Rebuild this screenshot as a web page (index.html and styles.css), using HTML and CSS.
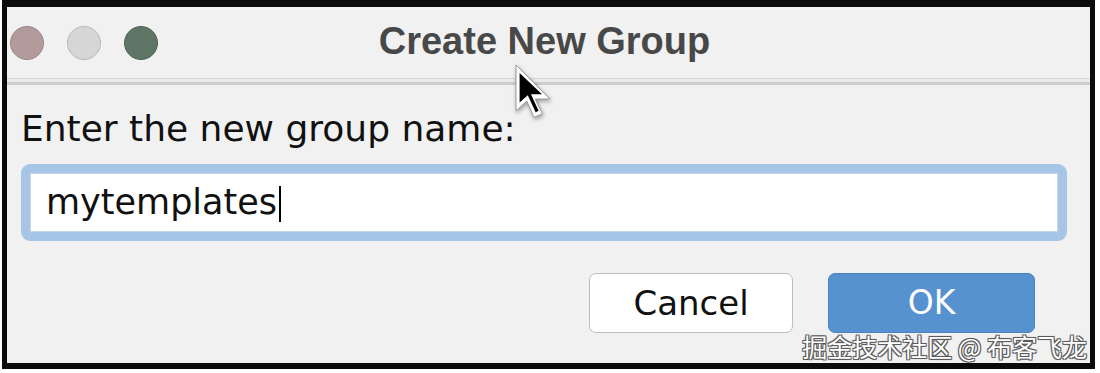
FILE: index.html
```html
<!DOCTYPE html>
<html lang="en">
<head>
<meta charset="utf-8">
<title>Create New Group</title>
<link rel="stylesheet" href="styles.css">
</head>
<body>
<div class="window">
  <div class="titlebar">
    <div class="lights">
      <span class="light light-close"></span>
      <span class="light light-min"></span>
      <span class="light light-max"></span>
    </div>
    <div class="title">Create New Group</div>
    <div class="spacer"></div>
  </div>
  <div class="sep"></div>
  <div class="content">
    <div class="label">Enter the new group name:</div>
    <div class="field"><span class="value">mytemplates</span><span class="caret"></span></div>
    <div class="actions">
      <button class="btn btn-cancel">Cancel</button>
      <button class="btn btn-ok">OK</button>
    </div>
  </div>
</div>
<svg class="pointer" width="40" height="56" viewBox="0 0 20 28" aria-hidden="true">
  <path d="M1,1 L1,24 L6.4,19 L10,27.2 L14.2,25.4 L10.6,18 L18,18 Z" fill="#ffffff" stroke="#9a9a9a" stroke-width="0.5" stroke-linejoin="round"/>
  <path d="M2.8,5 L2.8,19.8 L6.9,16.1 L10.8,24.6 L12.3,23.9 L8.5,15.6 L14,15.6 Z" fill="#000000"/>
</svg>
<div class="watermark">掘金技术社区 @ 布客飞龙</div>
</body>
</html>
```
FILE: styles.css
```css
html, body {
  margin: 0;
  padding: 0;
  background: #ffffff;
}

body {
  width: 1100px;
  height: 373px;
  overflow: hidden;
  font-family: "DejaVu Sans", "Liberation Sans", sans-serif;
}

.window {
  margin-left: 2px;
  width: 1093px;
  height: 369px;
  box-sizing: border-box;
  border-style: solid;
  border-color: #0b0b0b;
  border-width: 7px 5px 6px 5px;
  background: #f1f1f1;
  display: flex;
  flex-direction: column;
}

.titlebar {
  height: 71px;
  box-sizing: border-box;
  padding: 0 11px 4px 3px;
  display: grid;
  grid-template-columns: 1fr auto 1fr;
  align-items: center;
}

.lights {
  display: flex;
  gap: 23px;
  padding-top: 4px;
}

.light {
  width: 34px;
  height: 34px;
  border-radius: 50%;
  box-sizing: border-box;
}

.light-close {
  background: #b39b9b;
  border: 1px solid #9a8484;
}

.light-min {
  background: #d6d6d6;
  border: 1px solid #b8b8b8;
}

.light-max {
  background: #5e7566;
  border: 1px solid #4e6355;
}

.title {
  font-family: "Liberation Sans", Arial, sans-serif;
  font-weight: bold;
  font-size: 38px;
  color: #484848;
  line-height: 44px;
}

.sep {
  height: 7px;
  box-sizing: border-box;
  border-top: 1px solid #d6d6d6;
  border-bottom: 3px solid #cdcdcd;
  background: #ebebeb;
}

.content {
  flex: 1;
  padding: 23px 23px 0 14px;
  display: flex;
  flex-direction: column;
}

.label {
  font-size: 36px;
  line-height: 41px;
  color: #111111;
  margin-bottom: 15px;
}

.field {
  height: 77px;
  box-sizing: border-box;
  border: 9px solid #a5c6e7;
  border-radius: 9px;
  background: #ffffff;
  box-shadow: inset 0 0 0 1px #c9d6e3;
  padding: 9px 16px 0 16px;
  display: flex;
  align-items: flex-start;
}

.value {
  font-size: 35px;
  line-height: 41px;
  color: #111111;
}

.caret {
  display: inline-block;
  width: 2px;
  height: 36px;
  margin-top: 4px;
  margin-left: 2px;
  background: #000000;
}

.actions {
  margin-top: 32px;
  padding-right: 32px;
  display: flex;
  justify-content: flex-end;
  gap: 35px;
}

.btn {
  height: 60px;
  box-sizing: border-box;
  border-radius: 7px;
  font-family: "DejaVu Sans", sans-serif;
  padding: 0;
  line-height: 40px;
  cursor: default;
}

.btn-cancel {
  width: 204px;
  background: #ffffff;
  border: 1px solid #bdbdbd;
  color: #111111;
  font-size: 34px;
}

.btn-ok {
  width: 207px;
  background: #5592cf;
  border: 1px solid #4a83bd;
  color: #ffffff;
  font-size: 33px;
}

.pointer {
  position: absolute;
  left: 514px;
  top: 63px;
  filter: drop-shadow(1px 2px 2px rgba(0, 0, 0, 0.35));
}

.watermark {
  position: absolute;
  right: 13px;
  top: 331px;
  font-family: "Noto Sans CJK SC", sans-serif;
  font-size: 25px;
  line-height: 30px;
  color: #ffffff;
  text-shadow: -1px -1px 0 #5a5a5a, 1px -1px 0 #5a5a5a, -1px 1px 0 #5a5a5a, 1px 1px 0 #5a5a5a, 0 0 2px #444;
  white-space: nowrap;
}
```
